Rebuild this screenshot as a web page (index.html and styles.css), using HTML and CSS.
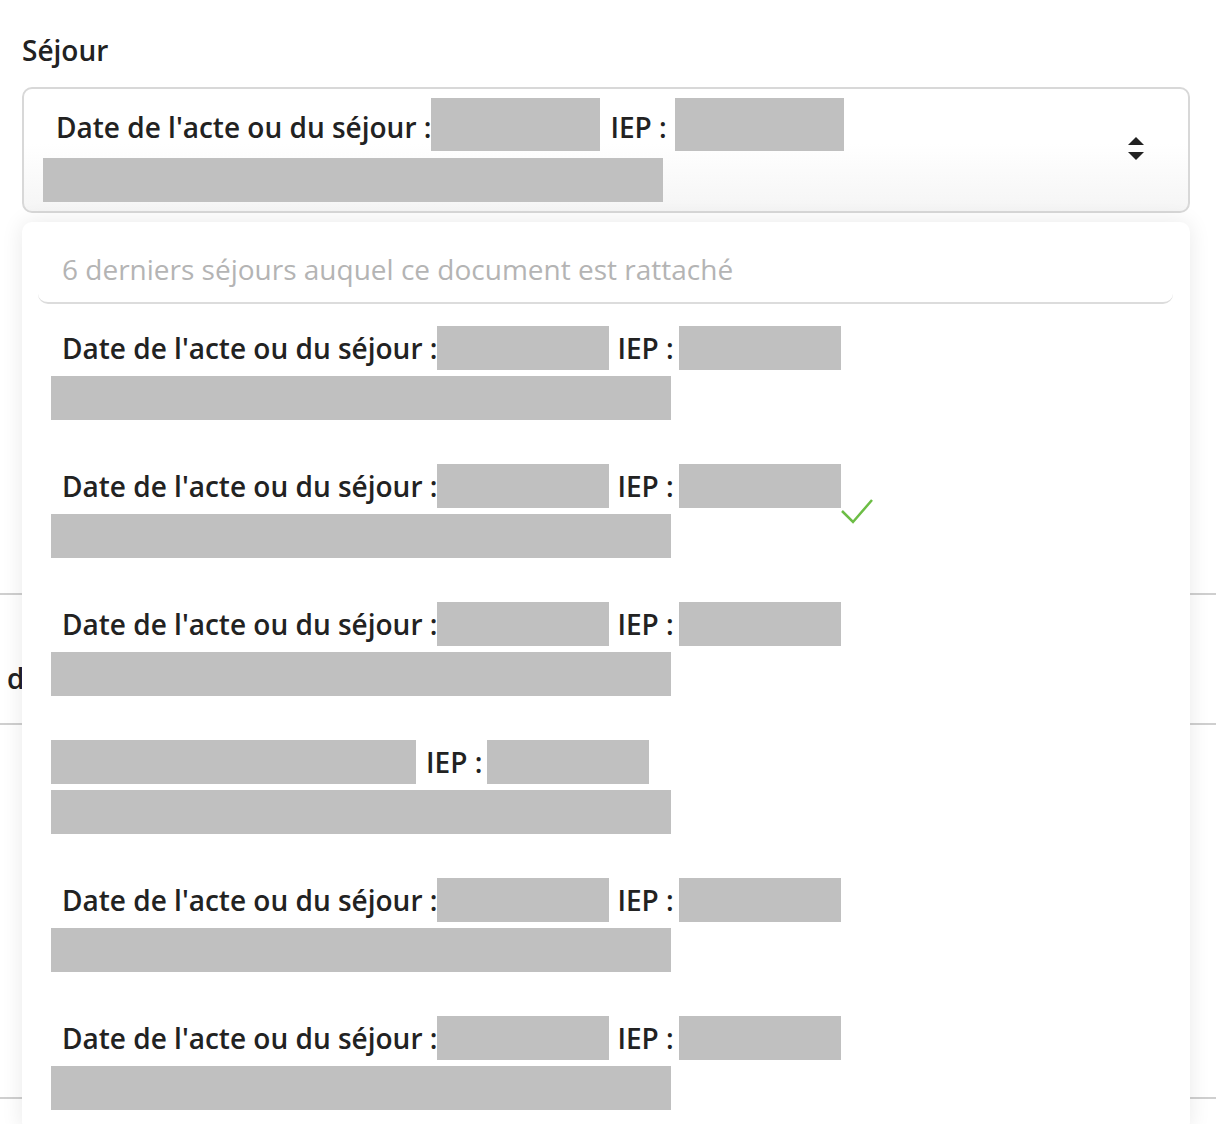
FILE: index.html
```html
<!DOCTYPE html>
<html lang="fr">
<head>
    <meta charset="UTF-8">
    <meta name="viewport" content="width=device-width, initial-scale=1.0">
    <title>Séjour</title>
    <link rel="stylesheet" href="styles.css">
</head>
<body>
    <div class="field">
        <label class="field-label">Séjour</label>

        <!-- Selected stay -->
        <div class="select">
            <div class="select-value">
                <div class="line line-big">
                    <span class="label">Date de l'acte ou du séjour :</span>
                    <span class="mask mask-date"></span>
                    <span class="label label-iep">IEP :</span>
                    <span class="mask mask-iep"></span>
                </div>
                <div class="line">
                    <span class="mask mask-unit"></span>
                </div>
            </div>
            <svg class="sort-icon" width="18" height="26" viewBox="0 0 18 26">
                <path d="M1 9 L9 1 L17 9 Z" fill="#222"/>
                <path d="M1 16 L9 24 L17 16 Z" fill="#222"/>
            </svg>
        </div>

        <!-- Options list -->
        <div class="dropdown">
            <div class="search">
                <input type="text" placeholder="6 derniers séjours auquel ce document est rattaché">
            </div>
            <ul class="options">
                <li class="option">
                    <div class="line">
                        <span class="label">Date de l'acte ou du séjour :</span>
                        <span class="mask mask-date"></span>
                        <span class="label label-iep">IEP :</span>
                        <span class="mask mask-iep"></span>
                    </div>
                    <div class="line"><span class="mask mask-unit"></span></div>
                </li>
                <li class="option selected">
                    <div class="line">
                        <span class="label">Date de l'acte ou du séjour :</span>
                        <span class="mask mask-date"></span>
                        <span class="label label-iep">IEP :</span>
                        <span class="mask mask-iep"></span>
                        <svg class="check" width="36" height="28" viewBox="0 0 36 28">
                            <path d="M3 14 L14 25 L33 3" fill="none" stroke="#6cbd45" stroke-width="2.5"/>
                        </svg>
                    </div>
                    <div class="line"><span class="mask mask-unit"></span></div>
                </li>
                <li class="option">
                    <div class="line">
                        <span class="label">Date de l'acte ou du séjour :</span>
                        <span class="mask mask-date"></span>
                        <span class="label label-iep">IEP :</span>
                        <span class="mask mask-iep"></span>
                    </div>
                    <div class="line"><span class="mask mask-unit"></span></div>
                </li>
                <li class="option">
                    <div class="line">
                        <span class="mask mask-long"></span>
                        <span class="label label-iep">IEP :</span>
                        <span class="mask mask-iep"></span>
                    </div>
                    <div class="line"><span class="mask mask-unit"></span></div>
                </li>
                <li class="option">
                    <div class="line">
                        <span class="label">Date de l'acte ou du séjour :</span>
                        <span class="mask mask-date"></span>
                        <span class="label label-iep">IEP :</span>
                        <span class="mask mask-iep"></span>
                    </div>
                    <div class="line"><span class="mask mask-unit"></span></div>
                </li>
                <li class="option">
                    <div class="line">
                        <span class="label">Date de l'acte ou du séjour :</span>
                        <span class="mask mask-date"></span>
                        <span class="label label-iep">IEP :</span>
                        <span class="mask mask-iep"></span>
                    </div>
                    <div class="line"><span class="mask mask-unit"></span></div>
                </li>
            </ul>
        </div>
    </div>

    <!-- Rest of the form -->
    <div class="rows">
        <div class="row"><span class="row-text">documents</span></div>
        <div class="row row-tall"></div>
        <div class="row"></div>
    </div>
</body>
</html>
```

FILE: styles.css
```css
/* Base */
body {
    margin: 0;
    font-family: "Open Sans", "Liberation Sans", sans-serif;
    color: #222;
    background-color: #fff;
}

/* Field */
.field {
    position: relative;
    padding: 31px 26px 0 22px;
}
.field-label {
    display: block;
    font-size: 28px;
    font-weight: 600;
    line-height: 38px;
    margin-bottom: 18px;
}

/* Select box */
.select {
    display: flex;
    align-items: center;
    justify-content: space-between;
    box-sizing: border-box;
    height: 126px;
    padding: 9px 43px 9px 19px;
    border: 2px solid #d8d8d8;
    border-radius: 10px;
    background: linear-gradient(#fff 45%, #f5f5f5);
}
.select-value {
    display: flex;
    flex-direction: column;
    gap: 7px;
}
.line {
    display: flex;
    align-items: flex-start;
    height: 44px;
}
.line-big {
    height: 53px;
}
.line-big .label {
    margin-top: 7px;
}
.label {
    font-size: 28px;
    font-weight: 600;
    line-height: 44px;
    white-space: nowrap;
    padding-left: 13px;
}
.label-iep {
    padding-left: 10px;
    padding-right: 8px;
}
.mask {
    display: inline-block;
    height: 100%;
    background-color: #c0c0c0;
}
.mask-date {
    width: 169px;
}
.mask-iep {
    width: 169px;
}
.mask-unit {
    width: 620px;
}
.mask-long {
    width: 365px;
}
.sort-icon {
    display: block;
    margin-top: -2px;
}

/* Dropdown panel */
.dropdown {
    position: absolute;
    top: 222px;
    left: 22px;
    right: 26px;
    background-color: #fff;
    border-radius: 10px;
    box-shadow: 0 0 22px rgba(0, 0, 0, 0.09);
    z-index: 10;
}
.search {
    margin: 0 17px 0 16px;
    padding-top: 10px;
    border-bottom: 2px solid #dcdcdc;
    border-radius: 0 0 10px 10px;
}
.search input {
    width: 100%;
    box-sizing: border-box;
    height: 70px;
    border: none;
    outline: none;
    padding: 4px 0 0 24px;
    font-family: inherit;
    font-size: 28px;
    color: #222;
    background: transparent;
}
.search input::placeholder {
    color: #b4b4b4;
}
.options {
    list-style: none;
    margin: 0;
    padding: 0;
}
.option {
    display: flex;
    flex-direction: column;
    gap: 6px;
    padding: 22px 29px;
}
.option .label {
    padding-left: 11px;
}
.option .label-iep {
    padding-left: 8px;
    padding-right: 5px;
}
.option .mask-date {
    width: 172px;
}
.option .mask-iep {
    width: 162px;
}
.option .mask-long + .label-iep {
    padding-left: 10px;
}
.check {
    margin-top: 33px;
    margin-left: -2px;
}

/* Rows behind the panel */
.rows {
    margin-top: 380px;
}
.row {
    height: 128px;
    border-top: 2px solid #cfcfcf;
}
.row-tall {
    height: 372px;
}
.row-text {
    display: block;
    padding: 64px 0 0 7px;
    font-size: 28px;
    font-weight: 600;
}
```
